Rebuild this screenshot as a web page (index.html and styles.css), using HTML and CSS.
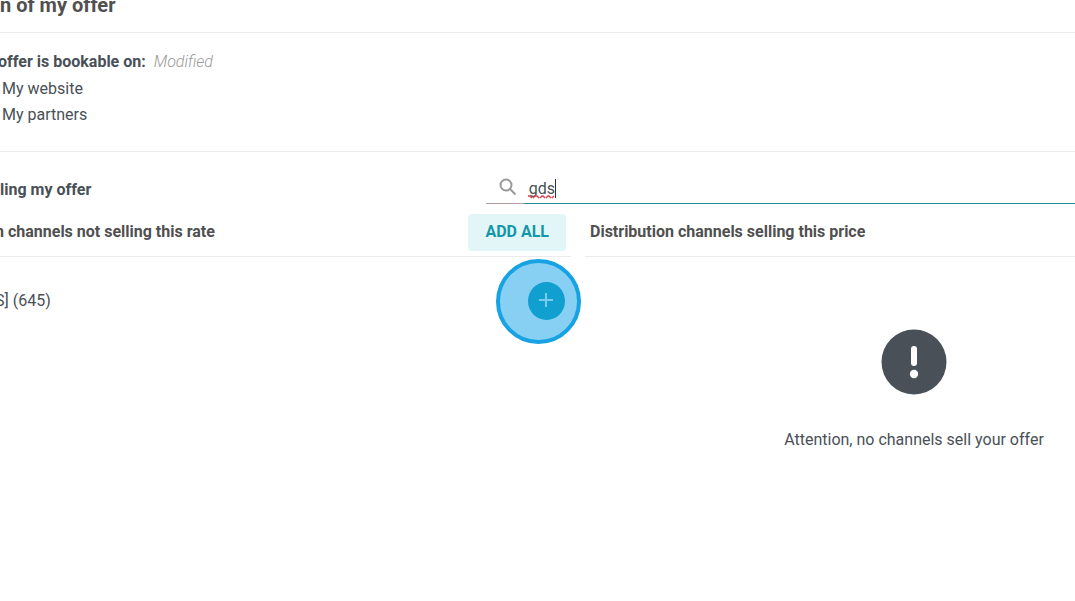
FILE: index.html
```html
<!DOCTYPE html>
<html lang="en">
<head>
<meta charset="utf-8">
<title>Distribution of my offer</title>
<link rel="stylesheet" href="styles.css">
</head>
<body>
<main class="page">
  <header class="title-bar"><h1 class="title">n of my offer</h1></header>

  <section class="bookable">
    <div class="bookable-head">
      <h2 class="label cut-label">offer is bookable on:</h2>
      <em class="modified">Modified</em>
    </div>
    <ul class="places">
      <li>My website</li>
      <li>My partners</li>
    </ul>
  </section>

  <section class="selling">
    <div class="search-row">
      <h2 class="label">ling my offer</h2>
      <div class="search">
        <label class="search-icon" for="channel-search" aria-label="Search channels">
          <svg width="18" height="18" viewBox="0 0 18 18" fill="none" stroke="#999" stroke-width="2"><circle cx="7" cy="7" r="5.5"/><path d="M11 11l5.5 5.5"/></svg>
        </label>
        <div class="field">
          <input class="search-input" id="channel-search" type="text" value="gds" spellcheck="false">
          <svg class="spelling" width="28" height="4" viewBox="0 0 28 4" fill="none" stroke="#d9414e" stroke-width="1.5"><path d="M0 1h2l2 2M5 3l2-2h2l2 2M12 3l2-2h1l2 2M18 3l2-2h1l2 2M24 3l2-2"/></svg>
          <span class="caret"></span>
        </div>
      </div>
    </div>

    <div class="columns">
      <section class="column">
        <header class="column-head">
          <h3 class="column-title cut">n channels not selling this rate</h3>
          <button class="add-all" type="button">ADD ALL</button>
        </header>
        <div class="channel">
          <span class="channel-name">S] (645)</span>
          <span class="add-wrap">
            <button class="add" type="button" aria-label="Add channel">
              <svg width="14" height="14" viewBox="0 0 14 14" stroke="#79cdeb" stroke-width="2"><path d="M7 0v14M0 7h14"/></svg>
            </button>
            <span class="highlight"></span>
          </span>
        </div>
      </section>
      <section class="column">
        <header class="column-head"><h3 class="column-title">Distribution channels selling this price</h3></header>
        <div class="empty">
          <svg width="66" height="66" viewBox="0 0 66 66"><circle cx="33" cy="33" r="32.5" fill="#495057"/><path d="M33 20v14" stroke="#fff" stroke-width="6" stroke-linecap="round"/><circle cx="33" cy="45" r="4.2" fill="#fff"/></svg>
          <p class="empty-text">Attention, no channels sell your offer</p>
        </div>
      </section>
    </div>
  </section>
</main>
</body>
</html>
```
FILE: styles.css
```css
* { box-sizing: border-box; }
body {
  margin: 0;
  background: #fff;
  color: #495057;
  font: 16px/26px Roboto, sans-serif;
  overflow-x: hidden;
}
h1, h2, h3, p, ul { margin: 0; padding: 0; }
button, input { font: inherit; }

.title-bar {
  height: 33px;
  border-bottom: 1px solid #ebebeb;
  overflow: hidden;
}
.title {
  margin-top: -8px;
  color: #505050;
  font-size: 20px;
  line-height: 26px;
  font-weight: 700;
}
.bookable {
  padding: 16px 0 23px;
  border-bottom: 1px solid #ebebeb;
}
.bookable-head { display: flex; gap: 8px; }
.label { font-size: 16px; font-weight: 700; }
.cut-label { margin-left: -2px; }
.modified { color: #999; font-weight: 300; }
.places { list-style: none; padding: 1px 0 0 2px; }

.selling { padding-top: 20px; }
.search-row {
  display: flex;
  justify-content: space-between;
  height: 32px;
  line-height: 36px;
}
.search { display: flex; flex: none; width: calc(55% - 2px); }
.search-icon {
  flex: none;
  width: 38px;
  padding: 6px 0 0 13px;
  border-bottom: 1px solid #b09c9c;
  line-height: 0;
}
.field {
  position: relative;
  flex: 1;
  border-bottom: 1px solid #278c98;
}
.search-input {
  display: block;
  width: 100%;
  height: 31px;
  padding: 4px 5px 2px;
  border: 0;
  outline: 0;
  background: transparent;
  color: #495057;
}
.spelling { position: absolute; left: 4px; top: 23px; }
.caret { position: absolute; left: 31px; top: 7px; width: 1px; height: 19px; background: #333; }

.columns {
  display: grid;
  grid-template-columns: 571fr 490fr;
  column-gap: 14px;
}
.column-head {
  display: flex;
  align-items: center;
  justify-content: space-between;
  height: 53px;
  padding: 4px 5px 0;
  border-bottom: 1px solid #ebebeb;
}
.column-title { color: #505050; font-size: 16px; font-weight: 700; }
.cut { margin-left: -10px; }
.add-all {
  height: 37px;
  padding: 0 17px;
  border: 0;
  border-radius: 4px;
  background: #e2f6f8;
  color: #1397a8;
  font-weight: 700;
}
.channel {
  display: flex;
  align-items: center;
  justify-content: space-between;
  height: 88px;
  padding-right: 6px;
}
.channel-name { margin-left: -5px; }
.add-wrap { position: relative; display: flex; }
.add {
  display: flex;
  align-items: center;
  justify-content: center;
  width: 37px;
  height: 38px;
  padding: 0 2px 2px 0;
  border: 0;
  border-radius: 50%;
  background: #109fcf;
  z-index: 1;
}
.highlight {
  position: absolute;
  left: -32px;
  top: -23px;
  width: 85px;
  height: 85px;
  border: 4px solid #16a2e3;
  border-radius: 50%;
  background: #87d0f4;
}
.empty {
  display: flex;
  flex-direction: column;
  align-items: center;
  gap: 32px;
  padding: 72px 0 0 168px;
}
.empty-text { white-space: nowrap; }
```
